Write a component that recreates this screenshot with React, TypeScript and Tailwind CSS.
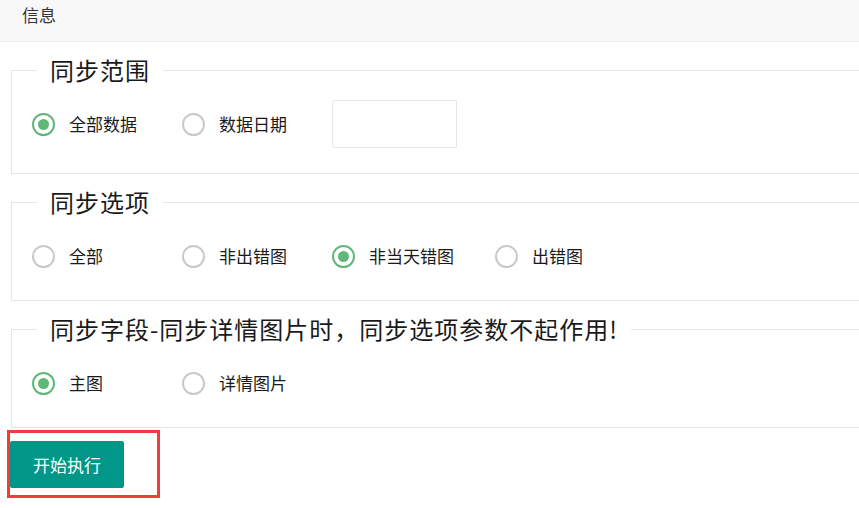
import React, { useState } from 'react';

const font = { fontFamily: '"Noto Sans CJK SC", "Noto Sans", sans-serif' };

interface RadioProps {
  label: string;
  checked: boolean;
  onSelect: () => void;
}

const Radio: React.FC<RadioProps> = ({ label, checked, onSelect }) => (
  <div
    className="flex items-center min-w-[150px] pr-[41px] cursor-pointer select-none"
    onClick={onSelect}
  >
    <span
      className={
        checked
          ? 'flex items-center justify-center w-[23px] h-[23px] rounded-full border-2 border-[#5fb878]'
          : 'flex items-center justify-center w-[23px] h-[23px] rounded-full border-2 border-[#c9c9c9]'
      }
    >
      {checked && <span className="w-[11px] h-[11px] rounded-full bg-[#5fb878]" />}
    </span>
    <span className="ml-[14px] text-[17px] leading-[24px] text-[#1a1a1a] whitespace-nowrap">{label}</span>
  </div>
);

interface GroupProps {
  title: string;
  className?: string;
  children: React.ReactNode;
}

const Group: React.FC<GroupProps> = ({ title, className = '', children }) => (
  <fieldset className={`ml-[11px] border border-r-0 border-[#e6e6e6] ${className}`}>
    <legend className="ml-[25px] px-[13px] text-[24px] leading-[24px] tracking-[1px] text-[#1a1a1a] whitespace-nowrap">
      {title}
    </legend>
    {children}
  </fieldset>
);

export default function App() {
  const [range, setRange] = useState('all');
  const [option, setOption] = useState('notToday');
  const [field, setField] = useState('main');

  return (
    <div className="min-h-screen bg-white overflow-hidden" style={font}>
      <div className="h-[42px] bg-[#f8f8f8] border-b border-[#eeeeee] px-[22px] pt-[4px] text-[17px] leading-[22px] text-[#333]">
        信息
      </div>

      <Group title="同步范围" className="mt-[16px] pb-[25px]">
        <div className="flex items-center h-[48px] mt-[18px] pl-[20px]">
          <Radio label="全部数据" checked={range === 'all'} onSelect={() => setRange('all')} />
          <Radio label="数据日期" checked={range === 'date'} onSelect={() => setRange('date')} />
          <input
            type="text"
            className="w-[125px] h-[48px] border border-[#e6e6e6] rounded-[2px] outline-none px-2 text-[17px]"
          />
        </div>
      </Group>

      <Group title="同步选项" className="mt-[16px] pb-[20px]">
        <div className="flex items-center h-[48px] mt-[18px] pl-[20px]">
          <Radio label="全部" checked={option === 'all'} onSelect={() => setOption('all')} />
          <Radio label="非出错图" checked={option === 'notError'} onSelect={() => setOption('notError')} />
          <Radio label="非当天错图" checked={option === 'notToday'} onSelect={() => setOption('notToday')} />
          <Radio label="出错图" checked={option === 'error'} onSelect={() => setOption('error')} />
        </div>
      </Group>

      <Group title="同步字段-同步详情图片时，同步选项参数不起作用!" className="mt-[16px] pb-[20px]">
        <div className="flex items-center h-[48px] mt-[18px] pl-[20px]">
          <Radio label="主图" checked={field === 'main'} onSelect={() => setField('main')} />
          <Radio label="详情图片" checked={field === 'detail'} onSelect={() => setField('detail')} />
        </div>
      </Group>

      <div className="ml-[7px] mt-[2px] w-[153px] h-[68px] border-[3px] border-[#f33b3b] pt-[8px]">
        <button className="h-[47px] w-[114px] bg-[#009688] rounded-[2px] text-white text-[17px] leading-[47px]">
          开始执行
        </button>
      </div>
    </div>
  );
}
